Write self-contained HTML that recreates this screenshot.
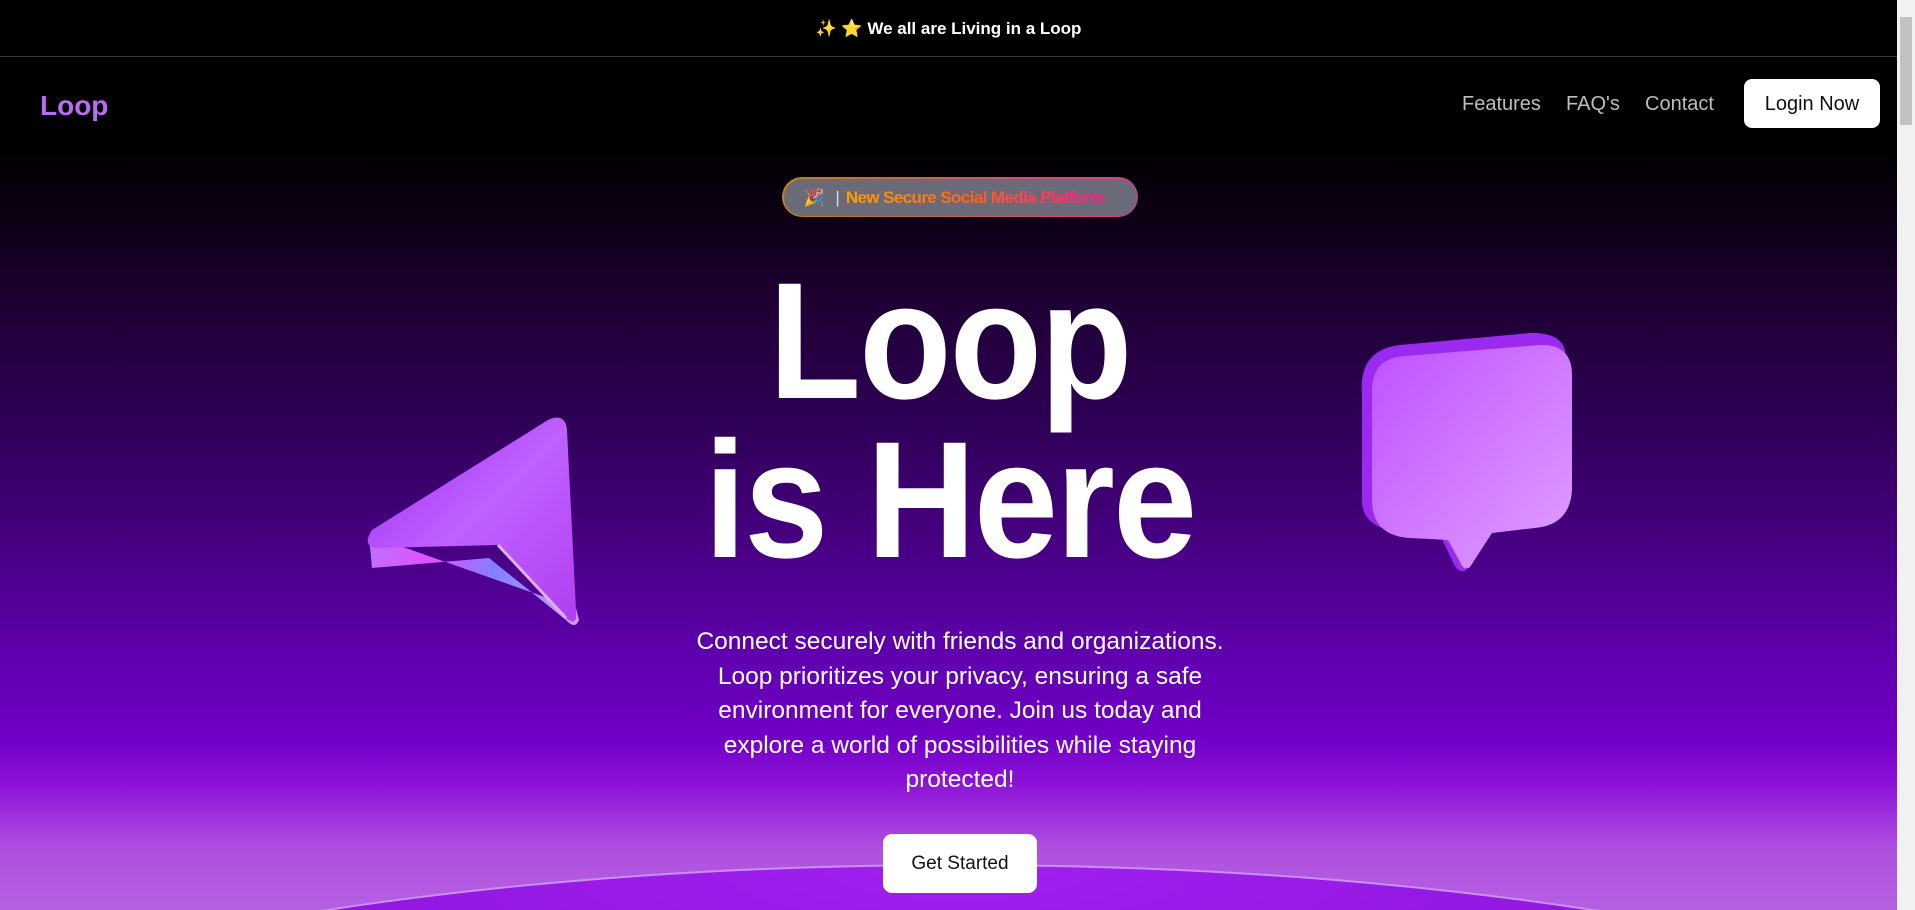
<!DOCTYPE html>
<html><head><meta charset="utf-8"><style>
*{margin:0;padding:0;box-sizing:border-box}
html,body{width:1915px;height:910px;overflow:hidden;font-family:"Segoe UI","Liberation Sans",sans-serif}
body{position:relative;background:linear-gradient(to bottom,#000 0px,#000 150px,#0d0016 220px,#1e0033 300px,#2e0055 420px,#4a0088 560px,#6000b0 660px,#7200c6 740px,#8a10d8 780px,#b050e0 850px,#b560e2 910px)}
.top{position:absolute;left:0;top:0;width:1897px;height:57px;background:#000;border-bottom:1px solid #3a3a3a;color:#fff;font-weight:bold;font-size:17px;text-align:center;line-height:57px}
.sb{position:absolute;right:0;top:0;width:18px;height:910px;background:#f1f1f1}
.sb div{position:absolute;left:3px;top:17px;width:12px;height:108px;background:#c1c1c1}
.logo{position:absolute;left:40px;top:90px;color:#b86cf5;font-weight:bold;font-size:28px}
.nav a{position:absolute;top:93px;color:#bdbdbd;font-size:20px;text-decoration:none}
.login{position:absolute;left:1744px;top:79px;width:136px;height:49px;background:#fff;border-radius:8px;color:#111;font-size:20px;text-align:center;line-height:51px}
.badge{position:absolute;left:782px;top:177px;width:356px;height:40px;border-radius:20px;padding:1.5px;background:linear-gradient(90deg,#c08020,#d04090)}
.badge div{width:100%;height:100%;border-radius:19px;background:#6b6a78;font-size:17px;line-height:37px;padding-left:20px;white-space:nowrap}
.badge span.t{background:linear-gradient(90deg,#ffa000,#ff6020 50%,#ff1a8c);-webkit-background-clip:text;background-clip:text;color:transparent;font-weight:bold;letter-spacing:-0.6px}
h1{position:absolute;left:0;width:1897px;text-align:center;color:#fff;font-weight:bold;font-size:166px;line-height:159px;top:262px;letter-spacing:-2px;transform:scaleX(0.91);transform-origin:962px 0}
p.d{position:absolute;left:560px;width:800px;top:625px;text-align:center;color:#fff;font-size:24.5px;line-height:34.6px;white-space:nowrap}
.gs{position:absolute;left:883px;top:834px;width:154px;height:59px;background:#fff;border-radius:9px;text-align:center;line-height:59px;font-size:19px;color:#111;font-weight:500;z-index:3}
</style></head><body>
<svg style="position:absolute;left:0;top:0" width="1897" height="910">
<defs>
<radialGradient id="ell" cx="0.5" cy="0" r="0.7">
<stop offset="0" stop-color="#a020f0"/><stop offset="0.6" stop-color="#8a12d8"/><stop offset="1" stop-color="#5a0a90"/></radialGradient>
<linearGradient id="ar" x1="0" y1="0" x2="1" y2="1"><stop offset="0" stop-color="#9a30f0"/><stop offset="0.5" stop-color="#c060ff"/><stop offset="1" stop-color="#b040f0"/></linearGradient>
<linearGradient id="ae" x1="0" y1="0" x2="1" y2="0"><stop offset="0" stop-color="#c070ff"/><stop offset="0.3" stop-color="#e050ff"/><stop offset="0.6" stop-color="#8080ff"/><stop offset="1" stop-color="#d0a0ff"/></linearGradient>
<linearGradient id="bu" x1="0" y1="0" x2="1" y2="1"><stop offset="0" stop-color="#c050ff"/><stop offset="1" stop-color="#e0a0ff"/></linearGradient>
</defs>
<ellipse cx="960" cy="1165" rx="1200" ry="300" fill="url(#ell)" stroke="#c890f0" stroke-width="2"/>
<path d="M369 535 L372 568 L489 558 L566 620 Q575 630 579 620 L576 608 Z" fill="url(#ae)"/>
<path d="M372 530 L548 420 Q565 412 567 430 L576 610 Q578 628 566 618 L498 545 L375 548 Q362 545 372 530 Z" fill="url(#ar)"/>
<path d="M498 545 L566 618" stroke="#e0b0ff" stroke-width="3"/>
<path d="M1362 395 Q1358 350 1400 345 L1530 333 Q1560 332 1565 350 L1565 480 Q1562 520 1520 528 L1485 532 L1466 570 Q1458 575 1452 560 L1440 535 L1400 532 Q1362 528 1362 500 Z" fill="#9a2af0"/>
<path d="M1372 390 Q1372 358 1405 356 L1540 345 Q1572 344 1572 375 L1572 490 Q1570 525 1535 528 L1492 533 L1470 567 Q1464 572 1460 562 L1448 540 L1410 538 Q1372 536 1372 500 Z" fill="url(#bu)"/>
</svg>
<div class="top">✨ ⭐ We all are Living in a Loop</div>
<div class="sb"><div></div></div>
<div class="logo">Loop</div>
<div class="nav"><a style="left:1462px">Features</a><a style="left:1566px">FAQ's</a><a style="left:1645px">Contact</a></div>
<div class="login">Login Now</div>
<div class="badge"><div>🎉 <span style="color:#ddd;margin:0 6px">|</span><span class="t">New Secure Social Media Platform</span></div></div>
<h1>Loop<br>is Here</h1>
<p class="d">Connect securely with friends and organizations.<br>Loop prioritizes your privacy, ensuring a safe<br>environment for everyone. Join us today and<br>explore a world of possibilities while staying<br>protected!</p>
<div class="gs">Get Started</div>
</body></html>
